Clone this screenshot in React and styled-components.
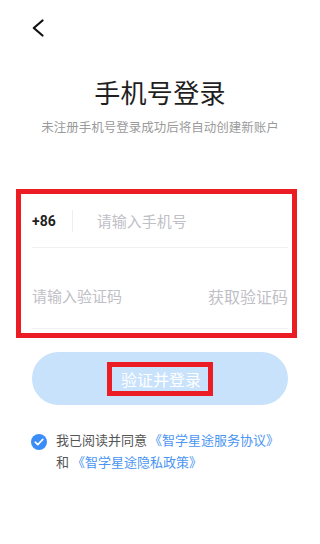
import React, { useState } from 'react'
import styled, { createGlobalStyle } from 'styled-components'

const GlobalStyle = createGlobalStyle`
  html, body {
    margin: 0;
    padding: 0;
    background: #ffffff;
  }
  body {
    font-family: "Noto Sans CJK SC", "Noto Sans", sans-serif;
  }
  * {
    box-sizing: border-box;
  }
`;

const Page = styled.div`
  width: 320px;
  min-height: 544px;
  padding: 0 32px;
  background: #fff;
`;

const TopBar = styled.div`
  height: 37px;
  padding-top: 19px;
`;

const BackButton = styled.button`
  display: block;
  padding: 0;
  border: none;
  background: none;
  cursor: pointer;
  line-height: 0;
`;

const Title = styled.h1`
  margin: 37px 0 0;
  font-size: 26px;
  line-height: 36px;
  font-weight: 400;
  color: #1f1f1f;
  text-align: center;
  letter-spacing: 0.3px;
`;

const Subtitle = styled.p`
  margin: 8px -4px 0;
  font-size: 12.5px;
  line-height: 18px;
  color: #9b9b9b;
  text-align: center;
`;

const Highlight = styled.div`
  border: 5px solid #ec1c24;
`;

const FormBox = styled(Highlight)`
  margin: 53px -9px 0 -16px;
  padding: 0 4px 4px 11px;
`;

const Row = styled.div`
  display: flex;
  align-items: center;
  height: ${(p) => p.$height}px;
  padding-top: ${(p) => p.$top || 0}px;
  border-bottom: 1px solid #eff0f4;
`;

const Prefix = styled.span`
  font-family: Roboto, "Noto Sans", sans-serif;
  font-size: 14px;
  font-weight: 700;
  color: #1f1f1f;
  padding-right: 16px;
  border-right: 1px solid #eeeeee;
  line-height: 22px;
`;

const Field = styled.input`
  flex: 1;
  min-width: 0;
  border: none;
  outline: none;
  padding: 0;
  margin-left: ${(p) => p.$indent || 0}px;
  font-family: "Noto Sans CJK SC", sans-serif;
  font-size: 15px;
  line-height: 22px;
  color: #333;
  background: transparent;
  &::placeholder {
    color: #bfc0c7;
  }
`;

const CodeLink = styled.span`
  font-size: 16px;
  line-height: 22px;
  color: #bfc0c7;
  white-space: nowrap;
`;

const SubmitButton = styled.button`
  display: flex;
  align-items: center;
  justify-content: center;
  width: 100%;
  height: 53px;
  margin-top: 14px;
  border: none;
  border-radius: 27px;
  background: #c8e2fc;
  cursor: pointer;
  padding: 0;
`;

const ButtonLabel = styled(Highlight)`
  padding: 0 7px 0 9px;
  font-family: "Noto Sans CJK SC", sans-serif;
  font-size: 16px;
  line-height: 24px;
  color: #ffffff;
`;

const Agreement = styled.div`
  display: flex;
  align-items: flex-start;
  margin-top: 24px;
  gap: 9px;
`;

const CheckCircle = styled.span`
  flex: none;
  width: 16px;
  height: 16px;
  margin: 5px 0 0 -1px;
  border-radius: 50%;
  background: ${(p) => (p.$on ? '#3a8df6' : '#fff')};
  border: ${(p) => (p.$on ? 'none' : '1px solid #ccc')};
  display: flex;
  align-items: center;
  justify-content: center;
`;

const AgreeText = styled.p`
  margin: 0;
  font-size: 13px;
  line-height: 22px;
  color: #555555;
`;

const Link = styled.span`
  color: #4a95f2;
  margin-left: ${(p) => p.$gap || 0}px;
`;

export default function App() {
  const [agreed, setAgreed] = useState(true);

  return (
    <Page>
      <GlobalStyle />
      <TopBar>
        <BackButton aria-label="back">
          <svg width="12" height="18" viewBox="0 0 12 18">
            <polyline
              points="10.5,1.5 1.8,9 10.5,16.5"
              fill="none"
              stroke="#111"
              strokeWidth="2.2"
              strokeLinecap="round"
              strokeLinejoin="round"
            />
          </svg>
        </BackButton>
      </TopBar>

      <Title>手机号登录</Title>
      <Subtitle>未注册手机号登录成功后将自动创建新账户</Subtitle>

      <FormBox>
        <Row $height={54}>
          <Prefix>+86</Prefix>
          <Field $indent={24} placeholder="请输入手机号" />
        </Row>
        <Row $height={81} $top={16}>
          <Field placeholder="请输入验证码" />
          <CodeLink>获取验证码</CodeLink>
        </Row>
      </FormBox>

      <SubmitButton>
        <ButtonLabel>验证并登录</ButtonLabel>
      </SubmitButton>

      <Agreement>
        <CheckCircle $on={agreed} onClick={() => setAgreed(!agreed)}>
          {agreed && (
            <svg width="10" height="8" viewBox="0 0 10 8">
              <polyline
                points="1.2,4.2 3.8,6.6 8.8,1.4"
                fill="none"
                stroke="#fff"
                strokeWidth="1.6"
                strokeLinecap="round"
                strokeLinejoin="round"
              />
            </svg>
          )}
        </CheckCircle>
        <AgreeText>
          我已阅读并同意<Link $gap={2}>《智学星途服务协议》</Link>
          <br />
          和<Link $gap={3}>《智学星途隐私政策》</Link>
        </AgreeText>
      </Agreement>
    </Page>
  );
}
